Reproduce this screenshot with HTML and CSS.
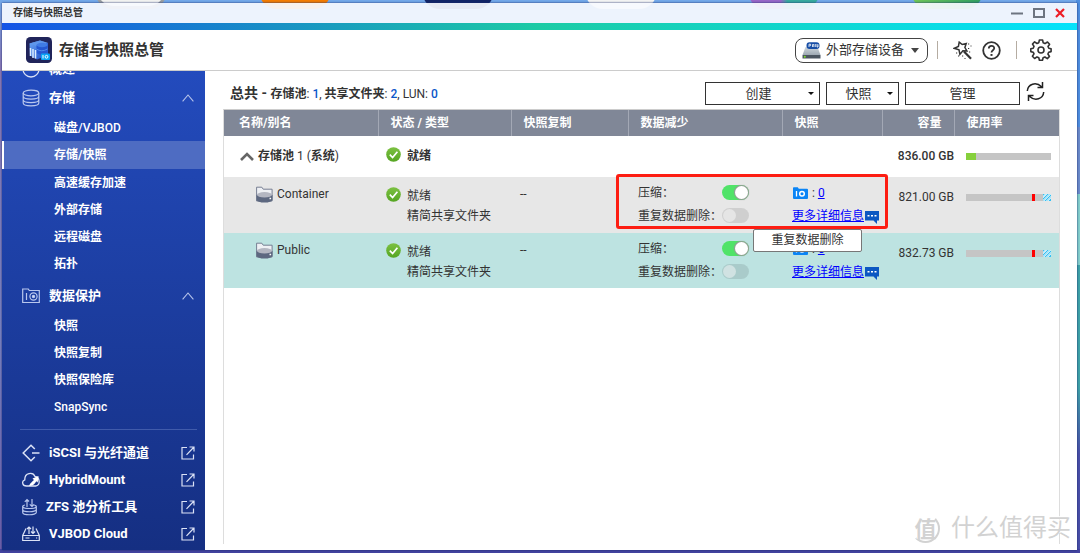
FILE: index.html
```html
<!DOCTYPE html>
<html lang="zh-CN">
<head>
<meta charset="utf-8">
<title>存储与快照总管</title>
<link rel="stylesheet" href="styles.css">
</head>
<body>
<svg class="defs" width="0" height="0" aria-hidden="true">
  <defs>
    <linearGradient id="g-ok" x1="0" y1="0" x2="0" y2="1"><stop offset="0" stop-color="#7cc142"/><stop offset="1" stop-color="#55a522"/></linearGradient>
    <linearGradient id="g-drive" x1="0" y1="0" x2="0" y2="1"><stop offset="0" stop-color="#cfd6dc"/><stop offset="1" stop-color="#9ea9b3"/></linearGradient>
    <linearGradient id="g-cube" x1="0" y1="0" x2="1" y2="1"><stop offset="0" stop-color="#6aa6f5"/><stop offset="1" stop-color="#1b49c4"/></linearGradient>
  </defs>
  <symbol id="ok" viewBox="0 0 15 15"><circle cx="7.5" cy="7.5" r="7.3" fill="url(#g-ok)"/><path d="M3.8 7.7l2.8 2.8 4.8-5.7" fill="none" stroke="#fff" stroke-width="1.7"/></symbol>
  <symbol id="folder" viewBox="0 0 17 17"><path d="M.6 15V1.2h5.2l1.4 2h8.900V15z" fill="#eef0f4" stroke="#6b7489" stroke-width=".9"/><path d="M.5 9v4.400c0 1.900 3.500 3.100 8 3.100s8-1.200 8-3.100V9z" fill="#5d6880"/><ellipse cx="8.500" cy="8.800" rx="7.600" ry="2.700" fill="#b3b6c1"/><path d="M13.500 12.500h1.600" stroke="#fff" stroke-width="1.500"/></symbol>
  <symbol id="cam" viewBox="0 0 15 12"><path d="M0 1q0-.8.8-.8h4l1 1.500h8.200q1 0 1 1V11q0 1-1 1H1q-1 0-1-1z" fill="#0a84f5"/><path d="M3.500 4v5.500" stroke="#fff" stroke-width="1.300"/><circle cx="9" cy="6.800" r="2.300" fill="none" stroke="#fff" stroke-width="1.500"/></symbol>
  <symbol id="chat" viewBox="0 0 14 13"><path d="M0 0h14v9.500h-2V13L8.500 9.500H0z" fill="#0b57c2"/><path d="M2.500 4.800h2M6 4.800h2M9.500 4.800h2" stroke="#fff" stroke-width="1.600"/></symbol>
  <symbol id="up" viewBox="0 0 12 8"><path d="M.6 7.400L6 1l5.400 6.400" fill="none" stroke="#b6c3ea" stroke-width="1.100"/></symbol>
  <symbol id="ext" viewBox="0 0 14 14"><path d="M6 1.500H1v11.500h11.500V8.500M8.500 1h4.500v4.500M13 1L5.500 8.800" fill="none" stroke="#dbe2f6" stroke-width="1.200"/></symbol>
</svg>
<div class="desktop" aria-hidden="true">
  <i class="app app-silver"></i><i class="app app-orange"></i><i class="app app-navy"></i><i class="app app-white"></i><i class="app app-violet"></i><i class="app app-green"></i>
</div>
<div class="window">
  <div class="titlebar">
    <span class="titlebar-text">存储与快照总管</span>
    <div class="window-controls">
      <button aria-label="最小化"><svg width="12" height="12"><path d="M0 6.500h12" stroke="#6d7480" stroke-width="2"/></svg></button>
      <button aria-label="最大化"><svg width="12" height="12"><path d="M1 2h10v8H1z" fill="none" stroke="#6d7480" stroke-width="2"/></svg></button>
      <button aria-label="关闭"><svg width="10" height="12"><path d="M1 2l8 8M9 2L1 10" stroke="#ed1c24" stroke-width="2.200"/></svg></button>
    </div>
  </div>
  <div class="stripe"></div>
  <header class="header">
    <svg class="logo" width="26" height="26" viewBox="0 0 26 26"><rect width="26" height="26" rx="4.500" fill="#20245a"/><path d="M3.500 6.500L14 3.500l8 2.500v12l-11 4.500-7-4z" fill="url(#g-cube)"/><path d="M3.500 6.500L14 3.500l8 2.500-10.500 3.500z" fill="#5f97ec"/><path d="M11.500 9.500L22 6v4l-10.500 4z" fill="#2b61dc"/><path d="M10.500 8q5 4 11 0v8q-5 4-11 0z" fill="#2457d3"/><ellipse cx="16" cy="8" rx="5.500" ry="2.200" fill="#3f7be6"/><path d="M10.500 12q5 3.500 11 0" fill="none" stroke="#5c97f2" stroke-width=".8"/><path d="M4.500 11v8M7 12v9M9.500 13v8.500" stroke="#dcecff" stroke-width="1.500"/><rect x="15" y="16.500" width="9" height="6.500" rx="1" fill="#08a5f5"/><path d="M17 18v3.500" stroke="#fff"/><circle cx="20.500" cy="19.800" r="1.400" fill="none" stroke="#fff"/></svg>
    <h1>存储与快照总管</h1>
    <button class="device" aria-haspopup="menu">
      <svg width="19" height="17" viewBox="0 0 19 17"><path d="M3.500 5h12L18.500 13H.5z" fill="url(#g-drive)"/><path d="M.5 13h18v3.500H.5z" fill="#4b5560"/><circle cx="2.800" cy="14.800" r="1" fill="#7ee02a"/><rect x="4.500" y=".2" width="13" height="6.800" rx="3" fill="#174ea6"/><path d="M7 5V2.200h1.600v1.500H7.400M10.500 5V2.500h1.300V5M13.300 2v3M15 2v3h1V2.400" fill="none" stroke="#fff" stroke-width=".8"/></svg>
      <span>外部存储设备</span><i class="caret caret-lg"></i>
    </button>
    <i class="sep"></i>
    <button class="icon-btn" aria-label="向导"><svg width="19" height="19" viewBox="0 0 19 19" fill="none" stroke="#333" stroke-width="1.500"><path d="M6.200 1.200l3 2.300 4-1-1.300 4 2 3.500-4-.2-3 3.600-.9-4.500L1.200 7.300l4.200-1.800z"/><path d="M11 10.500l7 7.300" stroke-width="2.200"/><path d="M15 3h1.200M15 7.500h1.200M17.500 5h1M16 11h1.200M3 12h1.200M5 15h1.200M9 15h1.200M11.500 17.500h1" stroke-width="1.200"/></svg></button>
    <button class="icon-btn help" aria-label="帮助"><svg width="19" height="19" viewBox="0 0 19 19" fill="none" stroke="#333" stroke-width="1.800"><circle cx="9.500" cy="9.500" r="8.300"/><path d="M6.800 7.500C6.800 3.800 12.300 4 12.200 7.300c0 1.900-2.700 2-2.700 4.200"/><path d="M9.500 13v1.900" stroke-width="2"/></svg></button>
    <i class="sep sep-gear"></i>
    <button class="icon-btn" aria-label="设置"><svg width="22" height="22" viewBox="0 0 22 22" fill="none" stroke="#333" stroke-width="1.600"><path stroke-linejoin="round" d="M9.400 1h3.200l.6 2.800 1.800.8 2.500-1.600 2.100 2.200L18 7.500l.8 1.800 2.300.4v2.900l-2.400.6-.8 1.800 1.600 2.400-2.200 2.200-2.400-1.600-1.800.8-.6 2.400H9.400l-.6-2.500-1.800-.8-2.400 1.600-2.200-2.200L4 14.900l-.8-1.700L.8 12.600V9.700l2.400-.5L4 7.400 2.500 5l2.100-2.100L7 4.500l1.800-.8z"/><circle cx="11" cy="11" r="3"/></svg></button>
  </header>
  <div class="body">
    <nav class="sidebar">
      <div class="side-scroll">
        <a class="side-head" href="#"><svg width="18" height="18" viewBox="0 0 18 18" fill="none" stroke="#dbe2f6" stroke-width="1.300"><circle cx="9" cy="9" r="8"/><path d="M9 11V4"/></svg><span>概述</span></a>
        <a class="side-head" href="#"><svg width="18" height="18" viewBox="0 0 18 18" fill="none" stroke="#b9c7ee" stroke-width="1.200"><ellipse cx="9" cy="4" rx="7.800" ry="2.800"/><path d="M1.200 4v10c0 3.800 15.600 3.800 15.600 0V4M1.200 7.300c0 3.800 15.600 3.800 15.600 0M1.200 10.700c0 3.800 15.600 3.800 15.600 0"/></svg><span>存储</span><svg class="tail" width="12" height="8"><use href="#up"/></svg></a>
        <div class="side-list">
          <a href="#">磁盘<span class="latin">/VJBOD</span></a>
          <a href="#" class="selected" aria-current="page">存储/快照</a>
          <a href="#">高速缓存加速</a>
          <a href="#">外部存储</a>
          <a href="#">远程磁盘</a>
          <a href="#">拓扑</a>
        </div>
        <a class="side-head second" href="#"><svg width="18" height="18" viewBox="0 0 18 18" fill="none" stroke="#b9c7ee" stroke-width="1.200"><path d="M.7 2h5.600l1 1.500h10v12H.7zM4.500 6v7"/><circle cx="11.500" cy="9.500" r="3.600"/><circle cx="11.500" cy="9.500" r="1.100" fill="#dbe2f6"/></svg><span>数据保护</span><svg class="tail" width="12" height="8"><use href="#up"/></svg></a>
        <div class="side-list">
          <a href="#">快照</a>
          <a href="#">快照复制</a>
          <a href="#">快照保险库</a>
          <a href="#"><span class="latin">SnapSync</span></a>
        </div>
        <hr>
        <div class="side-links">
          <a href="#"><svg width="18" height="18" viewBox="0 0 18 18" fill="none" stroke="#dbe2f6" stroke-width="1.500"><path d="M12.800 5L9 1.200 1.200 9 9 16.800l3.800-3.800M10 9h7.500"/></svg><span>iSCSI 与光纤通道</span><svg class="tail" width="14" height="14"><use href="#ext"/></svg></a>
          <a href="#"><svg width="18" height="18" viewBox="0 0 18 18" fill="none" stroke="#dbe2f6" stroke-width="1.300"><path d="M4.500 15C0 15-.5 10 2.800 8.800 2.500 1.500 11 .8 13 5.500c4.800.5 6 9 .7 9.500z"/><path d="M7 15c1-3 3-4 5-6l-1.500-1.500L16.500 5l-.8 6.500-1.500-1.200c-1 2-2.500 4.700-7.200 4.700z" fill="#fff" stroke="none"/></svg><span>HybridMount</span><svg class="tail" width="14" height="14"><use href="#ext"/></svg></a>
          <a href="#"><svg width="15" height="18" viewBox="0 0 15 18" fill="none" stroke="#b9c7ee" stroke-width="1.200"><path d="M5 9V1.500M2.800 3.800L5 1.500l2 2M10 1v7.500M7.800 6.300L10 8.500l2.200-2.200M3 7C-1 8 0 10.500 7.500 10.500S16 8 12 7M.7 8.500v6c0 3 13.600 3 13.600 0v-6M.7 11.500c0 3 13.600 3 13.600 0"/></svg><span>ZFS 池分析工具</span><svg class="tail" width="14" height="14"><use href="#ext"/></svg></a>
          <a href="#"><svg width="18" height="18" viewBox="0 0 18 18" fill="none" stroke="#dbe2f6" stroke-width="1.200"><path d="M4 3.500L.7 10.500v5h16.600v-5L14 3.500M.7 10.500h16.600M3.500 13h4M14 13h1.200M7 9V2M5 4l2-2 2 2M11 1.500v7M9 6.500l2 2 2-2"/></svg><span>VJBOD Cloud</span><svg class="tail" width="14" height="14"><use href="#ext"/></svg></a>
        </div>
      </div>
    </nav>
    <main class="main">
      <div class="toolbar">
        <p class="summary"><strong>总共 - </strong><em>存储池</em>: <b>1</b>, <em>共享文件夹</em>: <b>2</b>, LUN: <b>0</b></p>
        <button class="tool wide" aria-haspopup="menu"><span>创建</span><i class="caret"></i></button>
        <button class="tool" aria-haspopup="menu"><span>快照</span><i class="caret"></i></button>
        <button class="tool wide"><span>管理</span></button>
        <button class="icon-btn refresh" aria-label="刷新"><svg width="19" height="21" viewBox="0 0 19 21" fill="none" stroke="#222" stroke-width="1.500"><path d="M1.300 10C1.800 3 10 .3 15.600 5.800M16.500 1v5.500H11.500M17.700 11c-.5 7-8.700 9.700-14.300 4.200M2.500 20v-5.500h5"/></svg></button>
      </div>
      <div class="table-wrap">
        <table>
          <colgroup><col><col class="c-status"><col class="c-rep"><col class="c-red"><col class="c-snap"><col class="c-cap"><col class="c-use"></colgroup>
          <thead><tr><th>名称/别名</th><th>状态 / 类型</th><th>快照复制</th><th>数据减少</th><th>快照</th><th class="num">容量</th><th>使用率</th></tr></thead>
          <tbody>
            <tr class="pool">
              <td><div class="pool-name"><svg width="14" height="9"><path d="M1 8l6-6 6 6" fill="none" stroke="#666" stroke-width="2.600"/></svg><span><em>存储池</em> 1 (<em>系统</em>)</span></div></td>
              <td><div class="status"><svg width="15" height="15"><use href="#ok"/></svg><em>就绪</em></div></td>
              <td></td><td></td><td></td>
              <td class="num">836.00 GB</td>
              <td><div class="bar"><i class="used"></i></div></td>
            </tr>
            <tr class="share">
              <td><div class="share-name"><svg width="17" height="17"><use href="#folder"/></svg><span>Container</span></div></td>
              <td><div class="status"><svg width="15" height="15"><use href="#ok"/></svg><span>就绪<br>精简共享文件夹</span></div></td>
              <td class="dash">--</td>
              <td class="reduce"><label><span>压缩：</span><input type="checkbox" role="switch" checked></label><label><span>重复数据删除：</span><input type="checkbox" role="switch"></label></td>
              <td class="snap"><div><svg width="15" height="12"><use href="#cam"/></svg><span>: <a href="#">0</a></span></div><div class="more"><a href="#">更多详细信息</a><svg width="14" height="13"><use href="#chat"/></svg></div></td>
              <td class="num cap">821.00 GB</td>
              <td class="usage"><div class="bar"><i class="mark"></i><i class="hatch"></i></div></td>
            </tr>
            <tr class="share active">
              <td><div class="share-name"><svg width="17" height="17"><use href="#folder"/></svg><span>Public</span></div></td>
              <td><div class="status"><svg width="15" height="15"><use href="#ok"/></svg><span>就绪<br>精简共享文件夹</span></div></td>
              <td class="dash">--</td>
              <td class="reduce"><label><span>压缩：</span><input type="checkbox" role="switch" checked></label><label><span>重复数据删除：</span><input type="checkbox" role="switch"></label></td>
              <td class="snap"><div><svg width="15" height="12"><use href="#cam"/></svg><span>: <a href="#">0</a></span></div><div class="more"><a href="#">更多详细信息</a><svg width="14" height="13"><use href="#chat"/></svg></div></td>
              <td class="num cap">832.73 GB</td>
              <td class="usage"><div class="bar"><i class="mark"></i><i class="hatch"></i></div></td>
            </tr>
          </tbody>
        </table>
        <div class="highlight"></div>
        <div class="tooltip" role="tooltip">重复数据删除</div>
      </div>
    </main>
  </div>
  <div class="watermark"><span class="seal">值</span><span>什么值得买</span></div>
</div>
</body>
</html>
```
FILE: styles.css
```css
* { box-sizing: border-box; }
body {
  margin: 0;
  height: 100vh;
  padding: 3px 3px 3px 2px;
  display: flex;
  overflow: hidden;
  font: 12px/20px Roboto, "Noto Sans CJK SC", sans-serif;
  color: #333;
  background:
    linear-gradient(#4343a0, #4343a0) bottom / 100% 4px no-repeat,
    linear-gradient(#4f8fe0 0 23%, #6c8bcb 23% 35%, #84cfcc 35% 48%, #3fa3a8 48% 70%, #4a4fa8 82%) right / 4px 100% no-repeat,
    linear-gradient(#74a9ea, #8c7ab8 12%, #7d85c4 60%, #6f60ac) left / 3px 100% no-repeat,
    #74a9ea;
}
button { font: inherit; color: inherit; padding: 0; margin: 0; border: 0; background: none; display: flex; align-items: center; }
a { color: inherit; text-decoration: none; }
em { font-style: normal; font-weight: 700; }
svg { flex: none; display: block; }
.defs { position: absolute; }

.desktop { position: absolute; top: 0; left: 0; width: 100%; height: 10px; overflow: hidden; }
.app { position: absolute; bottom: 1px; width: 72px; height: 40px; border-radius: 18px; }
.app-silver { left: 95px; background: #f3f3f1; border: 3px solid #9a9fa3; }
.app-orange { left: 259px; background: #f57c00; }
.app-navy { left: 422px; background: #122466; }
.app-white { left: 585px; background: #f4f4f4; }
.app-violet { left: 748px; background: linear-gradient(90deg, #9967c8 45%, #38ab9f 55%); }
.app-green { left: 911px; background: linear-gradient(90deg, #72c858, #2f9f62); }

.window { position: relative; flex: 1; min-width: 0; display: flex; flex-direction: column; box-shadow: 0 0 2px #1a2a6a; }
.titlebar { height: 20px; flex: none; display: flex; align-items: center; justify-content: space-between; padding: 0 12px 0 11px; background: rgba(246, 249, 254, .93); }
.titlebar-text { font-size: 10px; font-weight: 700; color: #333; }
.window-controls { display: flex; gap: 10px; }
.stripe { height: 7px; flex: none; background: linear-gradient(90deg, #1453e6, #1ccba5 50%, #04e2fb); }
.header { height: 41px; flex: none; display: flex; align-items: center; padding: 0 25px 0 24px; background: #fff; border-bottom: 1px solid #ccc; }
.header h1 { margin: 0 auto 0 7px; font-size: 15px; font-weight: 700; color: #333; }
.device { height: 25px; padding: 0 8px 0 6px; gap: 5px; border: 1px solid #444; border-radius: 8px; font-size: 13px; }
.caret { border: 3px solid transparent; border-top-color: #111; border-bottom: 0; }
.caret-lg { border-width: 5px 4px 0; border-top-color: #444; margin-left: 2px; }
.sep { width: 1px; height: 18px; margin: 0 15px 0 9px; background: #b5aca2; }
.sep-gear { margin: 0 13px 0 15px; }
.help { margin-left: 10px; }

.body { flex: 1; min-height: 0; display: flex; background: #fff; }
.sidebar { width: 203px; flex: none; overflow: hidden; color: #fff; background: linear-gradient(#234bbd, #152f82); }
.side-scroll { margin-top: -17px; }
.side-head, .side-links a { display: flex; align-items: center; gap: 9px; height: 29px; padding: 0 10px 0 20px; font-size: 13px; font-weight: 700; }
.side-head .tail { margin-right: 1px; }
.side-head.second { margin-top: 4px; }
.tail { margin-left: auto; }
.side-list { display: flex; flex-direction: column; padding-top: 2px; }
.side-list a { height: 27px; line-height: 29px; padding-left: 52px; font-weight: 700; }
.side-list .latin { font-weight: 500; }
.side-list .selected { height: 28px; border-left: 2px solid #fff; padding-left: 50px; background: #4e6cc2; }
.sidebar hr { margin: 9px 8px 9px 18px; border: 0; border-top: 1px solid #405bab; }
.side-links a { height: 27px; }

.main { flex: 1; min-width: 0; display: flex; flex-direction: column; padding: 11px 17px 6px 18px; }
.toolbar { display: flex; align-items: center; gap: 6px; height: 23px; flex: none; margin-bottom: 4px; padding: 0 15px 0 7px; }
.summary { margin: 0 auto 0 0; }
.summary strong { font-size: 14px; font-weight: 700; }
.summary b { font-weight: 500; color: #0b57c9; }
.tool { position: relative; width: 73px; height: 23px; justify-content: center; border: 1px solid #333; font-size: 13px; padding-right: 8px; }
.tool.wide { width: 115px; padding-right: 0; }
.tool.wide[aria-haspopup] { padding-right: 8px; }
.tool .caret { position: absolute; right: 5px; }
.refresh { margin-top: -4px; }

.table-wrap { position: relative; flex: 1; border: 1px solid #ddd; border-top-color: #ccc; border-bottom: 0; }
table { width: 100%; border-collapse: collapse; table-layout: fixed; }
.c-status { width: 133px; } .c-rep { width: 117px; } .c-red { width: 154px; } .c-snap { width: 100px; } .c-cap { width: 72px; } .c-use { width: 105px; }
th { height: 26px; padding: 0 12px; text-align: left; font-weight: 700; color: #fff; background: #808797; border-right: 1px solid #a3a8b5; }
th:first-child { padding-left: 15px; }
th:last-child { border-right: 0; }
td { padding: 0; }
.num { text-align: right; }
.pool { height: 41px; }
.pool .num { font-weight: 500; }
.pool-name { display: flex; align-items: center; gap: 4px; padding-left: 16px; }
.pool td { padding-top: 10px; padding-bottom: 11px; }
.status { display: flex; align-items: flex-start; gap: 6px; padding-left: 8px; }
.status svg { margin-top: 1px; }
td.num { white-space: nowrap; }
.share { height: 56px; background: #e7e7e7; vertical-align: top; }
.share.active { height: 55px; background: #bde3e1; }
.share td { padding-top: 7px; }
.share-name { display: flex; align-items: center; gap: 4px; padding-left: 32px; }
.share .status { padding-top: 2px; }
.dash { padding-left: 9px; }
.reduce label { display: flex; justify-content: space-between; align-items: center; height: 23px; padding: 0 33px 0 10px; white-space: nowrap; }
.reduce span { width: 0; }
.share .reduce, .share .snap { padding-top: 4px; }
.reduce input { appearance: none; flex: none; margin: 0; width: 27px; height: 15px; border-radius: 8px; background: rgba(0, 0, 0, .1); }
.reduce input::before { content: ""; display: block; width: 13px; height: 13px; margin: 1px; border-radius: 50%; background: rgba(255, 255, 255, .45); }
.reduce input:checked { background: #50e368; }
.reduce input:checked::before { margin-left: 13px; background: #fff; box-shadow: 0 0 1px 1px #999; }
.snap div { display: flex; align-items: center; height: 23px; gap: 4px; padding-left: 11px; }
.snap .more { gap: 1px; padding-left: 10px; white-space: nowrap; }
.snap .more svg { margin-top: 4px; }
.snap a { color: #00f; text-decoration: underline; }
.share .cap { padding-top: 10px; }
.share .usage { padding-top: 17px; }
.bar { position: relative; height: 7px; margin: 0 8px 0 12px; background: #c5c5c5; }
.used { display: block; width: 12%; height: 100%; background: #86d03c; }
.mark { position: absolute; left: 78%; top: 0; width: 3px; height: 100%; background: #f00; }
.hatch { position: absolute; right: 0; top: 0; width: 8px; height: 100%; background: repeating-linear-gradient(135deg, #35bff2 0 1px, #a5e2f8 1px 2px, #c8eefa 2px 3px); }

.highlight { position: absolute; right: 171px; top: 64px; width: 272px; height: 55px; border: 3px solid #fd1d12; border-radius: 3px; }
.tooltip { position: absolute; right: 197px; top: 119px; width: 109px; height: 23px; line-height: 21px; text-align: center; background: #fff; border: 1px solid #777; border-radius: 2px; }

.watermark { position: absolute; right: 6px; bottom: 6px; display: flex; align-items: center; gap: 11px; font-size: 24px; line-height: 32px; color: #d2d2d2; text-shadow: -1px -1px #fff; }
.seal { width: 29px; height: 29px; line-height: 27px; text-align: center; font-size: 22px; font-weight: 700; border: 2px solid #d2d2d2; border-left-color: transparent; border-top-color: transparent; border-radius: 50%; }
```
